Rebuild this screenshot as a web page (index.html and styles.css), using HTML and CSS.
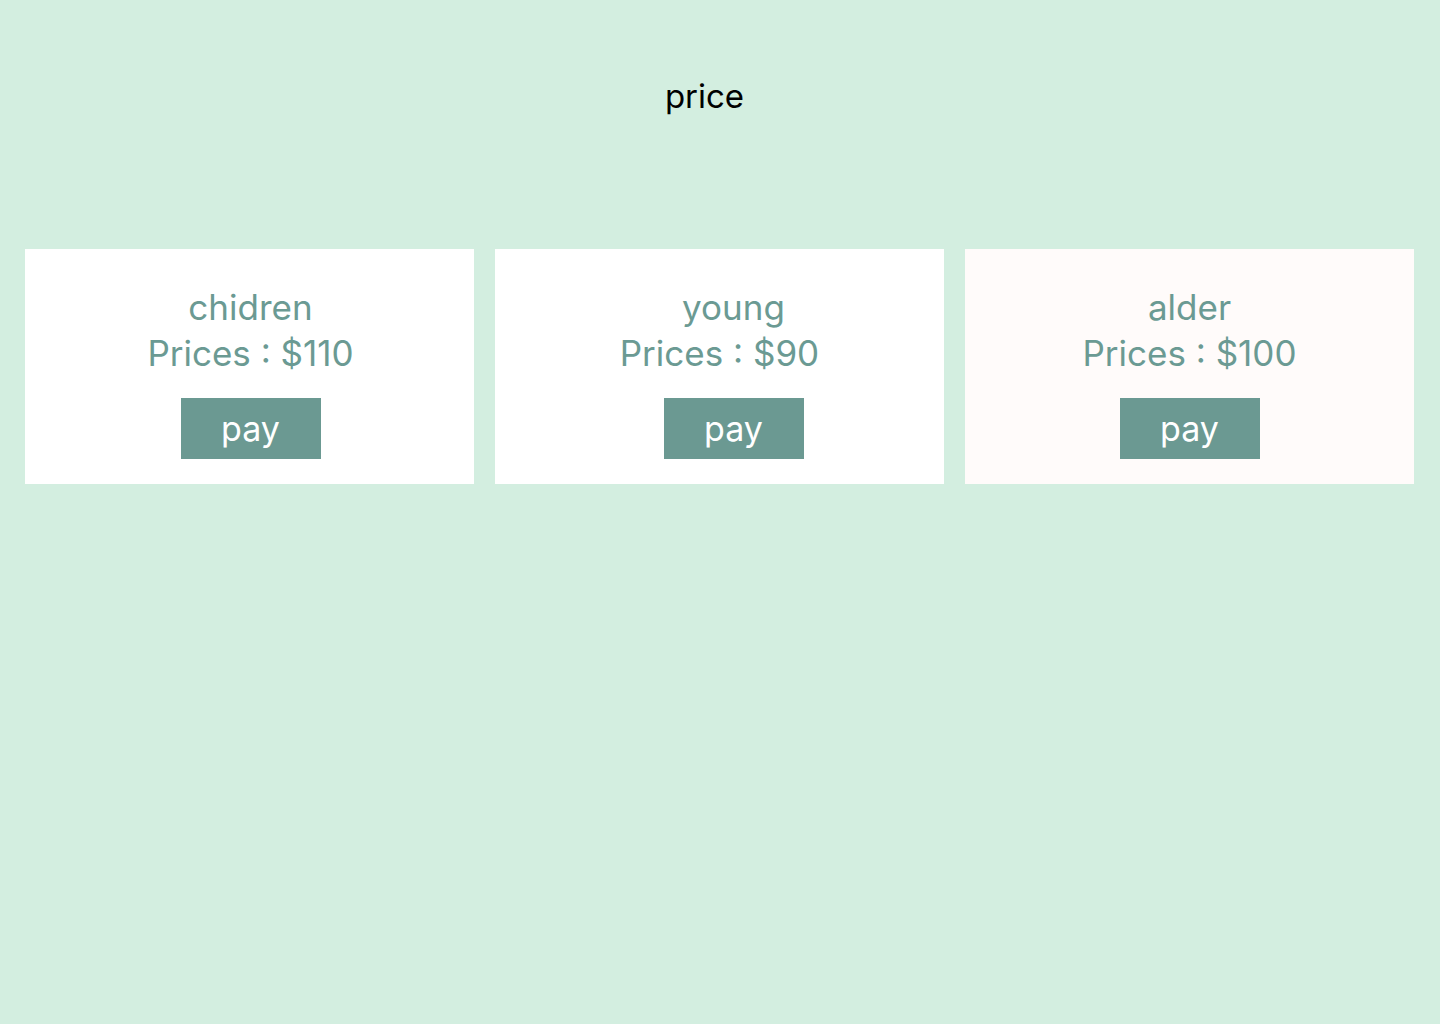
FILE: index.html
```html
<!DOCTYPE html>
<html>
<head>
<meta charset="utf-8">
<link rel="stylesheet" href="styles.css">
</head>
<body>
<header class="header">
  <h1 class="title">price</h1>
</header>
<main class="plans">
  <section class="card card-first">
    <h2 class="card-name">chidren</h2>
    <p class="card-price">Prices : $110</p>
    <button class="pay">pay</button>
  </section>
  <section class="card card-shift">
    <h2 class="card-name">young</h2>
    <p class="card-price">Prices : $90</p>
    <button class="pay">pay</button>
  </section>
  <section class="card card-alt">
    <h2 class="card-name">alder</h2>
    <p class="card-price">Prices : $100</p>
    <button class="pay">pay</button>
  </section>
</main>
</body>
</html>
```

FILE: styles.css
```css
* { box-sizing: border-box; }
html, body {
  margin: 0;
  padding: 0;
  background: #d3eee0;
  font-family: Inter, "Noto Sans", sans-serif;
}
body { min-height: 1024px; }
.header {
  height: 249px;
  display: flex;
  justify-content: center;
  padding-top: 74px;
}
.title {
  margin: 0 31px 0 0;
  font-size: 33px;
  font-weight: 400;
  line-height: 44px;
  color: #000;
}
.plans {
  display: grid;
  grid-template-columns: repeat(3, 1fr);
  gap: 21px;
  padding: 0 26px 0 25px;
}
.card {
  min-width: 0;
  background: #ffffff;
  padding: 35px 0 25px;
  text-align: center;
  display: flex;
  flex-direction: column;
  align-items: center;
}
.card-first { padding-left: 2px; }
.card-alt { background: #fffbfa; }
.card-name, .card-price {
  margin: 0;
  font-size: 35px;
  font-weight: 400;
  line-height: 46px;
  color: #6b9a93;
}
.card-price { margin-bottom: 22px; }
.pay {
  width: 140px;
  height: 61px;
  border: 0;
  padding: 0;
  background: #6b9992;
  color: #ffffff;
  font-family: Inter, "Noto Sans", sans-serif;
  font-size: 34px;
  line-height: 61px;
  cursor: pointer;
}
.card-shift .card-name { padding-left: 28px; }
.card-shift .pay { margin-left: 28px; }
```
